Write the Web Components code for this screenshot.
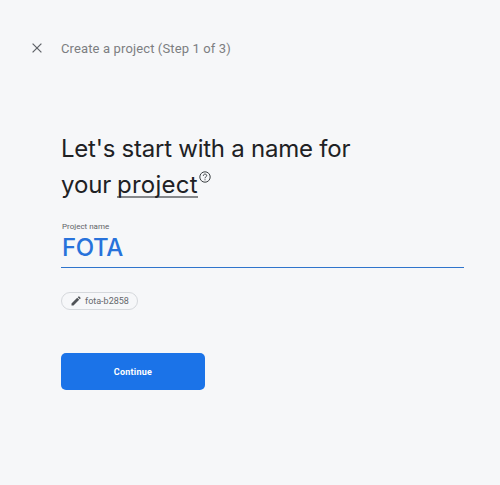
<!DOCTYPE html>
<html lang="en">
<head>
<meta charset="utf-8">
<title>Create a project</title>
<style>
html,body{margin:0;height:100%;background:#f6f7f9}
body{font-family:Roboto,"Liberation Sans",sans-serif}
</style>
</head>
<body>
<project-wizard></project-wizard>
<script>
const define = (name, markup) => {
  const template = document.createElement('template');
  template.innerHTML = markup;
  customElements.define(name, class extends HTMLElement {
    constructor() {
      super();
      this.attachShadow({mode: 'open'}).append(template.content.cloneNode(true));
    }
  });
};

define('wizard-header', `
<style>
:host{display:flex;align-items:center;height:20px;color:#7c7e81;font-size:13px;letter-spacing:.13px;line-height:20px}
svg{width:10px;height:10px;margin:0 19px 0 0;display:block}
span{padding-top:2px}
</style>
<svg viewBox="0 0 10 10" fill="none" stroke="#5f6368" stroke-width="1.25"><path d="M.6.6 9.4 9.4M9.4.6.6 9.4"/></svg>
<span><slot></slot></span>`);

define('help-icon', `
<style>:host{display:block;width:12px;height:12px}svg{display:block}</style>
<svg width="12" height="12" viewBox="0 0 12 12" fill="none" stroke="#3c4043" stroke-width="1"><circle cx="6" cy="6" r="5.2"/><path d="M4.3 4.8C4.3 2.5 7.7 2.6 7.7 4.6 7.7 5.9 6 5.8 6 7.3M6 8.3V9.3"/></svg>`);

define('wizard-title', `
<style>
:host{display:block;font:400 24px/36px Inter,"Liberation Sans",sans-serif;color:#202124}
.first{letter-spacing:-.24px;white-space:nowrap}
.second{display:flex;height:36px}
.lead{width:56px;letter-spacing:-.1px}
.term{height:29px;line-height:36px;border-bottom:2px solid #85878a;letter-spacing:.25px}
help-icon{margin:4px 0 0 1px}
</style>
<div class="first"><slot></slot></div>
<div class="second"><span class="lead"><slot name="lead"></slot></span><span class="term"><slot name="term"></slot></span><help-icon></help-icon></div>`);

define('name-field', `
<style>
:host{display:block;box-sizing:border-box;width:403px;height:48px;padding:1px 0 0 1px;border-bottom:1px solid #2f74cc}
.label{font-size:8px;line-height:12px;color:#5f6368;height:12px}
.value{font:500 24px/30px Inter,"Liberation Sans",sans-serif;color:#2872db;letter-spacing:-.4px}
</style>
<div class="label"><slot name="label"></slot></div>
<div class="value"><slot></slot></div>`);

define('id-chip', `
<style>
:host{display:flex;align-items:center;box-sizing:border-box;width:77px;height:18px;padding-left:9px;border:1px solid #d5d8dc;border-radius:9px;color:#65686c;font-size:9px;line-height:16px;white-space:nowrap}
svg{display:block;margin-right:4px}
</style>
<svg width="10" height="10" viewBox="0 0 10 10" fill="#505357"><path d="M.5 9.5V7.5L6.2 1.8 8.2 3.8 2.5 9.5ZM6.8 1.2 7.5.5Q7.9.2 8.3.5L9.5 1.7Q9.8 2.1 9.5 2.5L8.8 3.2Z"/></svg>
<span><slot></slot></span>`);

define('primary-button', `
<style>
:host{display:block;width:144px;height:37px}
button{display:block;width:100%;height:100%;padding:2px 0 0;border:0;border-radius:5px;background:#1b73e8;color:#fff;font:700 9px/35px Roboto,sans-serif;letter-spacing:.25px}
</style>
<button><slot></slot></button>`);

define('project-wizard', `
<style>
:host{display:flex;flex-direction:column;box-sizing:border-box;height:485px;padding:38px 36px 0 32px;background:#f6f7f9}
main{margin:73px 0 0 29px;display:flex;flex-direction:column;align-items:flex-start}
name-field{margin-top:17px;padding-top:1px}
id-chip{margin-top:24px}
primary-button{margin-top:43px}
</style>
<wizard-header>Create a project (Step 1 of 3)</wizard-header>
<main>
<wizard-title>Let's start with a name for<span slot="lead">your</span><span slot="term">project</span></wizard-title>
<name-field><span slot="label">Project name</span>FOTA</name-field>
<id-chip>fota-b2858</id-chip>
<primary-button>Continue</primary-button>
</main>`);
</script>
</body>
</html>
